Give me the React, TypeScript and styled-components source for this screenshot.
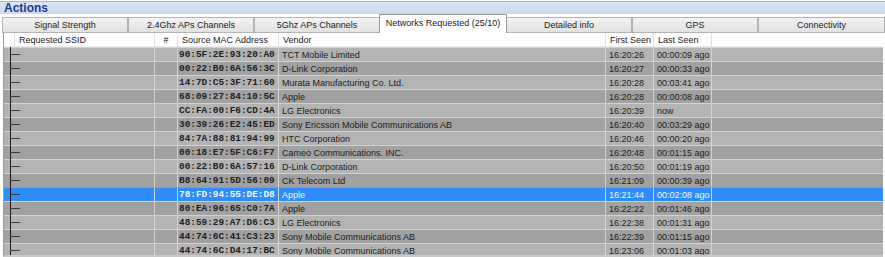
import React from 'react';
import styled, { createGlobalStyle } from 'styled-components';

const GlobalStyle = createGlobalStyle`
  html, body {
    margin: 0;
    padding: 0;
    background: #ffffff;
  }
  body {
    font-family: "Liberation Sans", Arial, sans-serif;
  }
`;

const COLS = '11px 140px 23px 101px 327px 48px 58px 1fr';

const Page = styled.div`
  width: 885px;
  height: 257px;
  display: flex;
  flex-direction: column;
  overflow: hidden;
  background: #ffffff;
`;

const TitleBar = styled.div`
  margin-top: 1px;
  height: 12px;
  border-top: 1px solid #9fb5de;
  background: linear-gradient(#dbe5f6, #cad8f0);
  display: flex;
  align-items: center;
  padding-left: 4px;
  font-size: 12px;
  font-weight: 700;
  color: #1c3d8a;
  line-height: 12px;
`;

const TabStrip = styled.div`
  height: 19px;
  display: flex;
  align-items: flex-end;
  padding-left: 2px;
  background: #ffffff;
`;

const Tab = styled.div<{ $active?: boolean }>`
  box-sizing: border-box;
  width: ${(p) => (p.$active ? '128px' : '126px')};
  margin: ${(p) => (p.$active ? '0 -1px' : '0')};
  height: ${(p) => (p.$active ? '19px' : '16px')};
  border: 1px solid ${(p) => (p.$active ? '#9a9a9a' : '#b4b4b4')};
  border-bottom: ${(p) => (p.$active ? 'none' : '1px solid #b4b4b4')};
  background: ${(p) => (p.$active ? '#ffffff' : 'linear-gradient(#f4f4f4, #e2e2e2)')};
  position: relative;
  z-index: ${(p) => (p.$active ? 1 : 0)};
  display: flex;
  align-items: center;
  justify-content: center;
  font-size: 9px;
  color: #1a1a1a;
  padding-bottom: ${(p) => (p.$active ? '2px' : '0')};
  &:last-child {
    flex: 1;
  }
`;

const Grid = styled.div`
  flex: 1;
  margin-left: 3px;
  margin-right: 2px;
  border-left: 1px solid #9c9c9c;
  border-bottom: 2px solid #c8c8c8;
  overflow: hidden;
  display: flex;
  flex-direction: column;
`;

const HeaderRow = styled.div`
  flex: none;
  height: 14px;
  display: grid;
  grid-template-columns: ${COLS};
  background: #ffffff;
`;

const HeadCell = styled.div<{ $center?: boolean; $last?: boolean }>`
  box-sizing: border-box;
  border-right: ${(p) => (p.$last ? 'none' : '1px solid #e2e2e2')};
  border-bottom: 1px solid #ededed;
  font-size: 9px;
  color: #222222;
  display: flex;
  align-items: center;
  justify-content: ${(p) => (p.$center ? 'center' : 'flex-start')};
  padding-left: ${(p) => (p.$center ? '0' : '4px')};
  white-space: nowrap;
  overflow: hidden;
`;

const Row = styled.div<{ $tone: 'light' | 'dark' | 'selected' }>`
  flex: none;
  box-sizing: border-box;
  height: 14px;
  display: grid;
  grid-template-columns: ${COLS};
  border-top: 1px solid ${(p) => (p.$tone === 'selected' ? '#5aa9ff' : '#d2d2d2')};
  background: ${(p) =>
    p.$tone === 'selected' ? '#2f8dfb' : p.$tone === 'dark' ? '#a1a1a1' : '#b3b3b3'};
  color: ${(p) => (p.$tone === 'selected' ? '#eef5ff' : '#202020')};
`;

const Cell = styled.div<{ $mono?: boolean; $last?: boolean }>`
  box-sizing: border-box;
  border-right: ${(p) => (p.$last ? 'none' : '1px solid #d4d4d4')};
  font-family: ${(p) =>
    p.$mono ? '"Liberation Mono", "Courier New", monospace' : '"Liberation Sans", Arial, sans-serif'};
  font-size: ${(p) => (p.$mono ? '9.4px' : '9px')};
  font-weight: ${(p) => (p.$mono ? 700 : 400)};
  padding-left: ${(p) => (p.$mono ? '1px' : '3px')};
  display: flex;
  align-items: center;
  white-space: nowrap;
  overflow: hidden;
`;

const TreeCell = styled.div`
  grid-column: span 2;
  box-sizing: border-box;
  border-right: 1px solid #d4d4d4;
  position: relative;
  &::before {
    content: '';
    position: absolute;
    left: 6px;
    top: -1px;
    bottom: 0;
    width: 1px;
    background: #1c1c1c;
  }
  &::after {
    content: '';
    position: absolute;
    left: 6px;
    top: 6px;
    width: 10px;
    height: 1px;
    background: #3a3a3a;
  }
`;

const tabs = [
  'Signal Strength',
  '2.4Ghz APs Channels',
  '5Ghz APs Channels',
  'Networks Requested (25/10)',
  'Detailed info',
  'GPS',
  'Connectivity',
];

type Entry = [string, string, string, string];

const rows: Entry[] = [
  ['90:5F:2E:93:20:A0', 'TCT Mobile Limited', '16:20:26', '00:00:09 ago'],
  ['00:22:B0:6A:56:3C', 'D-Link Corporation', '16:20:27', '00:00:33 ago'],
  ['14:7D:C5:3F:71:60', 'Murata Manufacturing Co. Ltd.', '16:20:28', '00:03:41 ago'],
  ['68:09:27:84:10:5C', 'Apple', '16:20:28', '00:00:08 ago'],
  ['CC:FA:00:F6:CD:4A', 'LG Electronics', '16:20:39', 'now'],
  ['30:39:26:E2:45:ED', 'Sony Ericsson Mobile Communications AB', '16:20:40', '00:03:29 ago'],
  ['84:7A:88:81:94:99', 'HTC Corporation', '16:20:46', '00:00:20 ago'],
  ['00:18:E7:5F:C6:F7', 'Cameo Communications. INC.', '16:20:48', '00:01:15 ago'],
  ['00:22:B0:6A:57:16', 'D-Link Corporation', '16:20:50', '00:01:19 ago'],
  ['B8:64:91:5D:56:09', 'CK Telecom Ltd', '16:21:09', '00:00:39 ago'],
  ['78:FD:94:55:DE:D8', 'Apple', '16:21:44', '00:02:08 ago'],
  ['80:EA:96:65:C0:7A', 'Apple', '16:22:22', '00:01:46 ago'],
  ['48:59:29:A7:D6:C3', 'LG Electronics', '16:22:38', '00:01:31 ago'],
  ['44:74:6C:41:C3:23', 'Sony Mobile Communications AB', '16:22:39', '00:01:15 ago'],
  ['44:74:6C:D4:17:BC', 'Sony Mobile Communications AB', '16:23:06', '00:01:03 ago'],
];

const SELECTED = 10;

export default function App() {
  return (
    <>
      <GlobalStyle />
      <Page>
        <TitleBar>Actions</TitleBar>
        <TabStrip>
          {tabs.map((t, i) => (
            <Tab key={t} $active={i === 3}>
              {t}
            </Tab>
          ))}
        </TabStrip>
        <Grid>
          <HeaderRow>
            <HeadCell />
            <HeadCell>Requested SSID</HeadCell>
            <HeadCell $center>#</HeadCell>
            <HeadCell>Source MAC Address</HeadCell>
            <HeadCell>Vendor</HeadCell>
            <HeadCell>First Seen</HeadCell>
            <HeadCell>Last Seen</HeadCell>
            <HeadCell $last />
          </HeaderRow>
          {rows.map(([mac, vendor, first, last], i) => (
            <Row
              key={mac + i}
              $tone={i === SELECTED ? 'selected' : i % 2 === 0 ? 'light' : 'dark'}
            >
              <TreeCell />
              <Cell />
              <Cell $mono>{mac}</Cell>
              <Cell>{vendor}</Cell>
              <Cell>{first}</Cell>
              <Cell>{last}</Cell>
              <Cell $last />
            </Row>
          ))}
        </Grid>
      </Page>
    </>
  );
}
